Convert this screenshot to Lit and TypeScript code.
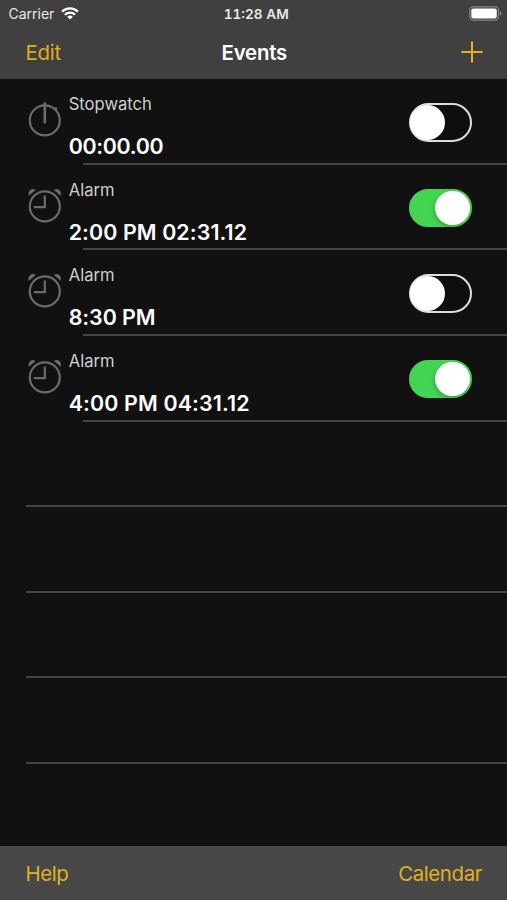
import { LitElement, html, css, svg } from "lit";
import { customElement, property } from "lit/decorators.js";
import { classMap } from "lit/directives/class-map.js";
import { styleMap } from "lit/directives/style-map.js";

interface EventItem {
  kind: "stopwatch" | "alarm";
  name: string;
  time: string;
  tracking: number;
  on: boolean;
}

const EVENTS: EventItem[] = [
  { kind: "stopwatch", name: "Stopwatch", time: "00:00.00", tracking: -0.32, on: false },
  { kind: "alarm", name: "Alarm", time: "2:00 PM 02:31.12", tracking: 0.1, on: true },
  { kind: "alarm", name: "Alarm", time: "8:30 PM", tracking: -0.04, on: false },
  { kind: "alarm", name: "Alarm", time: "4:00 PM 04:31.12", tracking: 0.14, on: true },
];

const EMPTY_ROWS = 4;

@customElement("toggle-switch")
class ToggleSwitch extends LitElement {
  @property({ type: Boolean }) on = false;

  static styles = css`
    :host { display: block; }
    .track {
      box-sizing: border-box;
      width: 62.6px;
      height: 38.4px;
      border-radius: 20px;
      border: 2px solid #dedede;
      background: #0e0e0e;
      display: flex;
      align-items: center;
      justify-content: flex-start;
    }
    .track.on {
      background: #43d551;
      border-color: #43d551;
      justify-content: flex-end;
    }
    .knob {
      width: 35.5px;
      height: 35.5px;
      flex: none;
      border-radius: 50%;
      background: #fff;
      margin-left: -1.4px;
    }
    .on .knob {
      width: 34.6px;
      height: 34.6px;
      margin: 0;
      box-shadow: -1px 2px 4px rgba(0, 0, 0, 0.22);
    }
  `;

  render() {
    return html`<div class=${classMap({ track: true, on: this.on })}><div class="knob"></div></div>`;
  }
}

@customElement("event-row")
class EventRow extends LitElement {
  @property({ attribute: false }) item!: EventItem;

  static styles = css`
    :host {
      display: flex;
      box-sizing: border-box;
      height: 85.6px;
      padding-left: 26px;
      padding-right: 35.4px;
    }
    .icon { width: 38px; height: 40px; margin-top: 21px; flex: none; }
    .texts { margin-left: 4.7px; padding-top: 15px; flex: 1; white-space: nowrap; }
    .name { font-size: 16.6px; line-height: 20px; color: #cfcfcf; }
    .time {
      font-size: 21.4px;
      line-height: 26px;
      font-weight: 600;
      color: #fff;
      margin-top: 19px;
    }
    toggle-switch { margin-top: 24.2px; }
  `;

  render() {
    const face = svg`<circle cx="18.8" cy="20.4" r="15" />`;
    const stopwatch = svg`${face}<path d="M18.8 2.4V23.4" stroke-width="2.6" /><path d="M29.2 7.2l1.8 1.8" stroke-width="1.6" />`;
    const alarm = svg`${face}<path d="M18.8 9.4V21.1H7.8" />
      <path d="M2.8 9.8C1.6 5.2 5.4 1.2 9.8 4Z M34.8 9.8C36 5.2 32.2 1.2 27.8 4Z" fill="#6c6c6c" stroke="none" />`;
    return html`
      <svg class="icon" viewBox="0 0 38 40" fill="none" stroke="#6c6c6c" stroke-width="2.2">
        ${this.item.kind === "stopwatch" ? stopwatch : alarm}
      </svg>
      <div class="texts">
        <div class="name">${this.item.name}</div>
        <div class="time" style=${styleMap({ letterSpacing: `${this.item.tracking}px` })}>${this.item.time}</div>
      </div>
      <toggle-switch ?on=${this.item.on}></toggle-switch>
    `;
  }
}

@customElement("app-root")
class AppRoot extends LitElement {
  static styles = css`
    :host {
      display: flex;
      flex-direction: column;
      height: 900px;
      background: #111;
      font-family: Inter, "Liberation Sans", sans-serif;
      overflow: hidden;
    }
    .top { height: 79px; background: #404040; flex: none; }
    .status, .nav {
      display: grid;
      grid-template-columns: 1fr auto 1fr;
      align-items: center;
      white-space: nowrap;
    }
    .status { height: 26px; padding: 0 5px 0 8.5px; font-size: 14px; color: #e8e8e8; }
    .left { display: flex; align-items: center; gap: 7px; }
    .carrier { padding-top: 1px; }
    .clock {
      font-weight: 600;
      font-size: 13.6px;
      font-variant-numeric: tabular-nums;
      padding: 1px 0 0 2px;
    }
    .right { justify-self: end; display: flex; }
    .nav { height: 53px; padding: 0 24px 0 25.5px; font-size: 20.4px; letter-spacing: -0.2px; color: #e0ac1c; }
    .nav .right { padding-bottom: 1px; }
    .title { font-weight: 600; color: #fff; }
    .list { flex: 1; }
    .cell { height: 85.6px; box-sizing: border-box; position: relative; }
    .divider {
      position: absolute;
      left: 26px;
      bottom: -0.2px;
      width: 481px;
      height: 2px;
      background: #444;
    }
    .filled .divider { left: 83px; width: 424px; }
    .bottom {
      height: 54px;
      box-sizing: border-box;
      padding: 0 25px 0 25.5px;
      display: flex;
      align-items: center;
      justify-content: space-between;
      background: #474747;
      color: #e0b020;
      font-size: 20.4px;
      letter-spacing: -0.38px;
      flex: none;
    }
  `;

  render() {
    return html`
      <div class="top">
        <div class="status">
          <div class="left">
            <span class="carrier">Carrier</span>
            <svg width="18" height="13" viewBox="0 0 18 13" fill="none" stroke="#fff" stroke-width="2.3">
              <path d="M1 4.6A11.4 11.4 0 0 1 17 4.6" />
              <path d="M3.9 7.7A7.3 7.3 0 0 1 14.1 7.7" />
              <path d="M9 12.6L6.2 9.8A4 4 0 0 1 11.8 9.8Z" fill="#fff" stroke="none" />
            </svg>
          </div>
          <span class="clock">11:28 AM</span>
          <div class="right">
            <svg width="33" height="15" viewBox="0 0 33 15">
              <rect x="0.8" y="0.8" width="28.8" height="13.4" rx="3.6" fill="none" stroke="#858585" stroke-width="1.2" />
              <rect x="2.3" y="2.4" width="25.5" height="10.2" rx="2" fill="#fff" />
              <path d="M31 5.2Q32.6 6 32.6 7.5T31 9.8Z" fill="#858585" />
            </svg>
          </div>
        </div>
        <div class="nav">
          <span>Edit</span>
          <span class="title">Events</span>
          <div class="right">
            <svg width="22" height="22" viewBox="0 0 22 22" stroke="#e9af16" stroke-width="2">
              <path d="M11 0.4V21.6M0.4 11H21.6" />
            </svg>
          </div>
        </div>
      </div>
      <div class="list">
        ${EVENTS.map((item) => html`<div class="cell filled"><event-row .item=${item}></event-row><div class="divider"></div></div>`)}
        ${Array.from({ length: EMPTY_ROWS }, () => html`<div class="cell"><div class="divider"></div></div>`)}
      </div>
      <div class="bottom"><span>Help</span><span>Calendar</span></div>
    `;
  }
}
